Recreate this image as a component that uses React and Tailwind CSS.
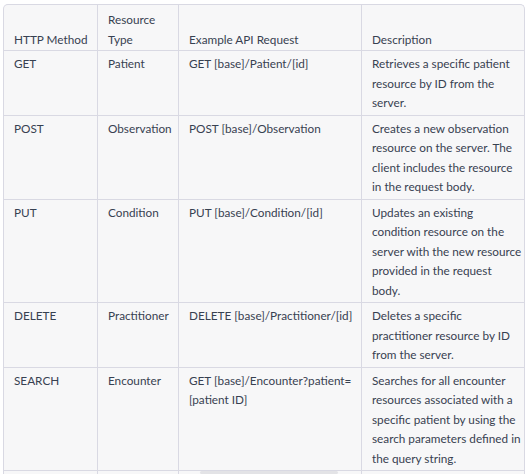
const rows = [
	{
		method: 'GET',
		type: 'Patient',
		request: ['GET [base]/Patient/[id]'],
		description: ['Retrieves a specific patient', 'resource by ID from the', 'server.'],
	},
	{
		method: 'POST',
		type: 'Observation',
		request: ['POST [base]/Observation'],
		description: [
			'Creates a new observation',
			'resource on the server. The',
			'client includes the resource',
			'in the request body.',
		],
	},
	{
		method: 'PUT',
		type: 'Condition',
		request: ['PUT [base]/Condition/[id]'],
		description: [
			'Updates an existing',
			'condition resource on the',
			'server with the new resource',
			'provided in the request',
			'body.',
		],
	},
	{
		method: 'DELETE',
		type: 'Practitioner',
		request: ['DELETE [base]/Practitioner/[id]'],
		description: ['Deletes a specific', 'practitioner resource by ID', 'from the server.'],
	},
	{
		method: 'SEARCH',
		type: 'Encounter',
		request: ['GET [base]/Encounter?patient=', '[patient ID]'],
		description: [
			'Searches for all encounter',
			'resources associated with a',
			'specific patient by using the',
			'search parameters defined in',
			'the query string.',
		],
	},
];

const cell = 'border-b border-r border-[#d9d9e3] px-[10px] pt-[3px] pb-[2px] whitespace-nowrap';
const lastCell = 'border-b border-[#d9d9e3] px-[10px] pt-[3px] pb-[2px] whitespace-nowrap';
const headCell =
	'border-b border-r border-[#d9d9e3] px-[10px] pt-[5px] pb-[1px] flex flex-col justify-end whitespace-nowrap';
const lastHeadCell =
	'border-b border-[#d9d9e3] px-[10px] pt-[5px] pb-[1px] flex flex-col justify-end whitespace-nowrap';

const Lines = ({ lines }) => lines.map((line) => <div key={line}>{line}</div>);

export default function App() {
	return (
		<div
			className="relative w-[529px] h-[474px] overflow-hidden bg-white pl-[3px] pt-[4px] text-[11.75px] leading-[19.5px] text-[#374151]"
			style={{ fontFamily: 'Lato, "Noto Sans", sans-serif' }}
		>
			<div className="w-[522px] rounded-t-[5px] border-l border-t border-r border-[#d9d9e3] bg-[#f7f7f8]">
				<div className="grid grid-cols-[94px_81px_183px_162px]">
					<div className={headCell}>HTTP Method</div>
					<div className={headCell}>
						<div>Resource</div>
						<div>Type</div>
					</div>
					<div className={headCell}>Example API Request</div>
					<div className={lastHeadCell}>Description</div>

					{rows.map((row) => (
						<div key={row.method} className="contents">
							<div className={cell}>{row.method}</div>
							<div className={cell}>{row.type}</div>
							<div className={cell}>
								<Lines lines={row.request} />
							</div>
							<div className={lastCell}>
								<Lines lines={row.description} />
							</div>
						</div>
					))}

					<div className={cell + ' h-[40px]'}></div>
					<div className={cell}></div>
					<div className={cell}></div>
					<div className={lastCell}></div>
				</div>
			</div>

			<div className="absolute bottom-0 left-[200px] h-[3px] w-[138px] rounded-full bg-[#e3e3e6]" />
		</div>
	);
}
